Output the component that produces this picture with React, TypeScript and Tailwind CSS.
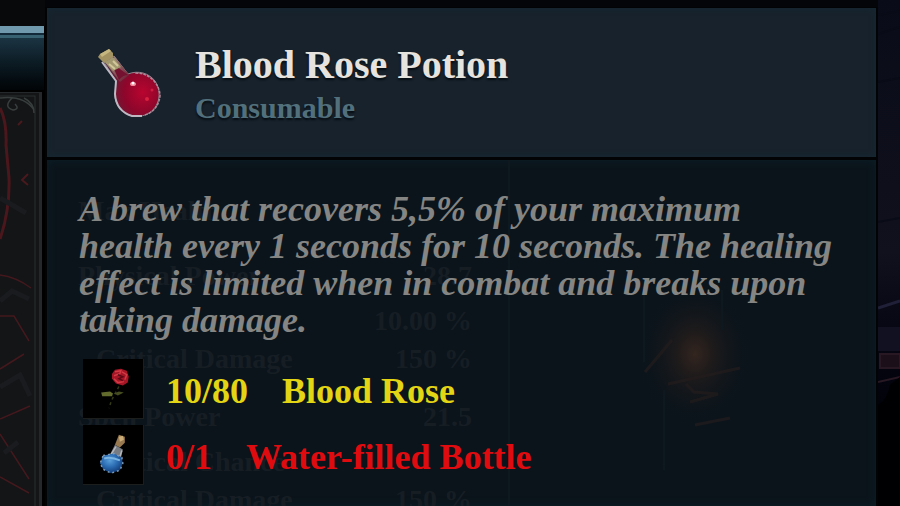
import React from "react";

type Stat = { label: string; value?: string };

const statGroups: Stat[][] = [
  [{ label: "Max Health" }],
  [
    { label: "Physical Power", value: "28.7" },
    { label: "", value: "10.00 %" },
    { label: "Critical Damage", value: "150 %" },
  ],
  [
    { label: "Spell Power", value: "21.5" },
    { label: "Critical Chance" },
    { label: "Critical Damage", value: "150 %" },
  ],
];

function PotionIcon() {
  return (
    <svg viewBox="0 0 72 76" className="h-[76px] w-[72px] shrink-0" aria-hidden="true">
      <defs>
        <radialGradient id="wine" cx="0.7" cy="0.6" r="0.68">
          <stop offset="0" stopColor="#b8052f" />
          <stop offset="0.5" stopColor="#8d062b" />
          <stop offset="1" stopColor="#552a3c" />
        </radialGradient>
        <linearGradient id="neck" x1="0" y1="0" x2="1" y2="1">
          <stop offset="0" stopColor="#aaa58f" />
          <stop offset="1" stopColor="#68112c" />
        </linearGradient>
      </defs>
      <path
        d="M9 17L19 11L33 29C43 25 54 28 60 36C68 48 64 65 50 70C36 75 21 66 20 51L21 36Z"
        fill="url(#wine)"
        stroke="#94838d"
        strokeWidth="1"
      />
      <path d="M10 17L20 12L34 30L25 37Z" fill="url(#neck)" />
      <path d="M18 22Q23 21 25 24L33 30Q28 30 24 35Z" fill="#741130" />
      <path d="M7 17L21 36L20 49Q21 66 37 71L47 71" fill="none" stroke="#bdb8c2" strokeWidth="2" strokeLinejoin="round" />
      <path d="M50 70Q63 66 65 51Q65 43 59 36Q52 28 40 28" fill="none" stroke="#a98c99" strokeWidth="1.5" strokeDasharray="3 1" />
      <path d="M5 9L14 4L18 8L18 12L9 18L3 12Z" fill="#a39362" />
      <path d="M5 9L14 4L16 6L7 12Z" fill="#c6b67f" />
      <path d="M10 17L18 12L26 22L18 26Z" fill="#a2986f" />
      <path d="M14 19L20 24M18 16L23 21" stroke="#d2c69b" strokeWidth="2" />
      <ellipse cx="38" cy="39" rx="3" ry="2" fill="#f08a9a" />
      <circle cx="38" cy="38" r="1.5" fill="#fff" />
      <circle cx="52" cy="54" r="2" fill="#d8203f" />
      <circle cx="57" cy="45" r="1.5" fill="#cc1c42" />
    </svg>
  );
}

function RoseIcon() {
  return (
    <svg viewBox="0 0 60 60" className="h-full w-full" aria-hidden="true">
      <path d="M36 28C33 34 29 39 26 50" fill="none" stroke="#343a18" strokeWidth="1.5" strokeDasharray="3 3" />
      <path d="M18 34L27 33L30 35L29 38L19 38Z" fill="#626a2c" />
      <path d="M31 35L36 33L41 34L35 37Z" fill="#454d20" />
      <path d="M29 15L32 11L38 10L44 12L46 18L45 24L40 27L33 25L29 20Z" fill="#a41626" />
      <path d="M32 13L38 12L37 15L31 17M39 13L44 16L42 21M31 20L35 24L41 23" fill="none" stroke="#d23a44" strokeWidth="1.5" />
      <path d="M35 16L40 18L36 20L40 22" fill="none" stroke="#5c0915" strokeWidth="1.5" />
    </svg>
  );
}

function WaterIcon() {
  return (
    <svg viewBox="0 0 60 60" className="h-full w-full" aria-hidden="true">
      <defs>
        <radialGradient id="water" cx="0.42" cy="0.35" r="0.65">
          <stop offset="0" stopColor="#5a9fda" />
          <stop offset="0.5" stopColor="#2c6db3" />
          <stop offset="1" stopColor="#123c78" />
        </radialGradient>
      </defs>
      <path d="M32 20L40 25L38 34L26 32Z" fill="#777b82" />
      <path d="M33 22L28 30M39 26L37 32" stroke="#b4b8bd" strokeWidth="1.5" />
      <path d="M34 15L36 10L42 12L42 18L37 23L32 20Z" fill="#98794f" />
      <path d="M36 12L40 11L41 15L37 17Z" fill="#c9ac78" />
      <path d="M20 31L31 29L39 33L40 39L37 46L28 49L20 45L17 39Z" fill="url(#water)" stroke="#7d9cb8" strokeWidth="1.5" strokeDasharray="2 3" />
      <path d="M21 34Q28 32 37 36" fill="none" stroke="#79b4e2" strokeWidth="2" />
    </svg>
  );
}

function LeftFrame() {
  return (
    <div className="flex w-[45px] shrink-0 flex-col bg-black">
      <div className="h-[26px] bg-[#08090b]" />
      <div className="mr-px h-[7px] bg-[#7199ad]" />
      <div className="mr-px h-[2px] bg-[#12293a]" />
      <div className="mr-px h-[3px] bg-[#376170]" />
      <div className="mr-px h-[52px] bg-linear-to-b from-[#1b3443] to-[#020507]" />
      <div className="mt-[2px] mr-[3px] flex-1 overflow-hidden border-t border-r-[3px] border-[#25282a] bg-[#131517]">
        <svg width="39" height="413" viewBox="0 0 39 413" fill="none" aria-hidden="true">
          <rect x="-4" y="3" width="39" height="430" stroke="#2c3131" />
          <path d="M0 5Q24 2 34 17M12 5Q3 14 13 17Q20 16 15 11M24 5Q34 10 34 20" stroke="#383e3d" strokeWidth="1.5" />
          <path d="M0 15Q7 29 6 52L9 85Q10 117 0 146" stroke="#4c171c" strokeWidth="3" />
          <path d="M28 81L22 87L28 92M22 28L18 32" stroke="#4a191e" strokeWidth="2" />
          <path d="M0 182Q16 184 31 195M0 223H14L29 248M0 276L24 261M0 326L30 313M0 341L29 386M0 384L29 400" stroke="#44181d" strokeWidth="1.5" />
          <path d="M0 208L12 198L29 206M0 294L20 282L30 303M4 360L18 349M0 105L26 120" stroke="#191b1e" strokeWidth="5" />
        </svg>
      </div>
    </div>
  );
}

function NightEdge() {
  return (
    <div className="w-[22px] shrink-0 overflow-hidden bg-linear-to-b from-[#090c18] via-[#11101d] to-[#000002]">
      <svg width="22" height="506" viewBox="0 0 22 506" aria-hidden="true">
        <path d="M0 15L22 11M0 34L22 27M0 82L22 78M0 222L22 218" stroke="#090b16" strokeWidth="2" />
        <path d="M0 308L22 301" stroke="#202038" strokeWidth="3" />
        <path d="M0 327H22V351H0Z" fill="#111122" />
        <path d="M2 354H22V368H2ZM0 382L22 377" fill="#1b101a" stroke="#271823" strokeWidth="2" />
        <path d="M0 405Q9 401 12 385L22 377V506H0Z" fill="#000002" />
      </svg>
    </div>
  );
}

function GhostStats() {
  return (
    <div
      className="absolute top-[32px] left-[31px] flex w-[394px] flex-col gap-[20px] text-[28px] leading-[38px] font-bold text-[#161e24]"
      aria-hidden="true"
    >
      {statGroups.map((group, g) => (
        <div key={g}>
          {group.map((stat, i) => (
            <div key={i} className={i === 0 ? "mb-[7px] flex justify-between" : "flex justify-between pl-[18px]"}>
              <span>{stat.label}</span>
              <span>{stat.value}</span>
            </div>
          ))}
        </div>
      ))}
    </div>
  );
}

function LanternGlow() {
  return (
    <svg className="absolute top-0 right-0" width="376" height="346" viewBox="0 0 376 346" fill="none" aria-hidden="true">
      <defs>
        <radialGradient id="glow">
          <stop offset="0" stopColor="#33251f" />
          <stop offset="0.3" stopColor="#1f1b1b" />
          <stop offset="1" stopColor="#0b141b" stopOpacity="0" />
        </radialGradient>
      </defs>
      <ellipse cx="195" cy="194" rx="58" ry="72" fill="url(#glow)" />
      <path d="M145 212L172 180M168 224L240 208M186 224L194 232L218 234L190 242M195 265L230 258" stroke="#231c1c" strokeWidth="3" opacity="0.7" />
      <path d="M9 0V346M144 130V202M164 230V310M222 130V170" stroke="#0e181f" strokeWidth="2" />
    </svg>
  );
}

function Ingredient({ icon, count, name, tone }: { icon: React.ReactNode; count: string; name: string; tone: string }) {
  return (
    <li className={`flex items-center ${tone}`}>
      <span className="mr-[22px] h-[60px] w-[61px] shrink-0 border-r border-b border-[#1c1e1d] bg-black">{icon}</span>
      <span className="mr-[34px] pt-[3px]">{count}</span>
      <span className="pt-[3px]">{name}</span>
    </li>
  );
}

export default function App() {
  return (
    <main className="flex h-screen overflow-hidden bg-[#040508] font-['Liberation_Serif',serif]">
      <LeftFrame />
      <article className="mt-[7px] flex min-w-0 flex-1 flex-col border-x-2 border-t border-[#010304] bg-[#0b141b]">
        <header className="flex h-[152px] shrink-0 items-center gap-[28px] border-b-[3px] border-[#010305] bg-[#17222c] pl-[48px] shadow-[inset_0_0_6px_#152a35]">
          <PotionIcon />
          <div className="pt-[6px] font-bold [text-shadow:0_2px_2px_#070d13]">
            <h1 className="text-[40px] leading-[44px] text-[#e6e3df]">Blood Rose Potion</h1>
            <p className="text-[30px] leading-[42px] text-[#52707c]">Consumable</p>
          </div>
        </header>
        <section className="relative flex-1 overflow-hidden pt-[31px] pr-[38px] pl-[32px] shadow-[inset_0_0_8px_#0c2028]">
          <GhostStats />
          <LanternGlow />
          <p className="relative text-[36px] leading-[37px] font-bold text-[#858583] italic">
            A brew that recovers 5,5% of your maximum health every 1 seconds for 10 seconds. The healing effect is
            limited when in combat and breaks upon taking damage.
          </p>
          <ul className="relative mt-[20px] ml-[4px] flex flex-col gap-[6px] text-[36px] leading-[40px] font-bold">
            <Ingredient icon={<RoseIcon />} count="10/80" name="Blood Rose" tone="text-[#e3d414]" />
            <Ingredient icon={<WaterIcon />} count="0/1" name="Water-filled Bottle" tone="text-[#df0b0f]" />
          </ul>
        </section>
      </article>
      <NightEdge />
    </main>
  );
}
